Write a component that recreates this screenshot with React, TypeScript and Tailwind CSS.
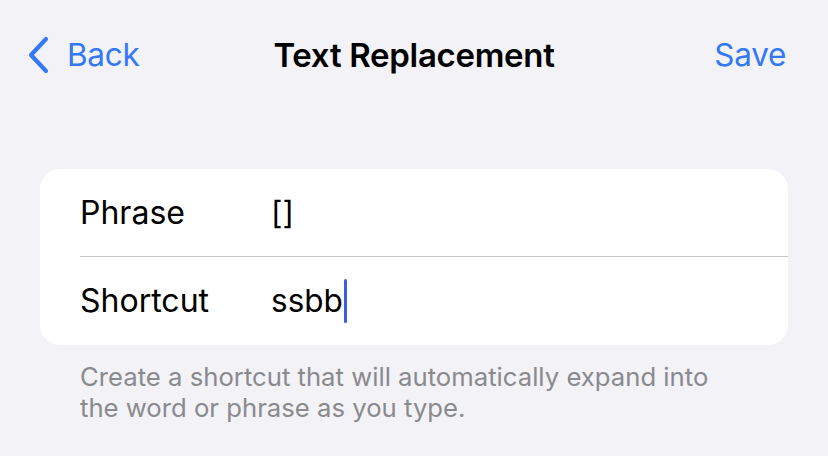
import React from 'react'

export default function App() {
  return (
    <div
      className="w-[828px] h-[456px] bg-[#f2f2f7] overflow-hidden"
      style={{ fontFamily: 'Inter, "Noto Sans", sans-serif' }}
    >
      {/* nav bar */}
      <div className="relative flex items-center justify-between h-[56px] mt-[27px] pl-[26px] pr-[42px]">
        <button className="flex items-center gap-[17px] text-[#3478f6]">
          <svg width="24" height="38" viewBox="0 0 24 38" fill="none">
            <path d="M20 3 L5 19 L20 35" stroke="#3478f6" strokeWidth="4.2" strokeLinecap="round" strokeLinejoin="round" />
          </svg>
          <span className="text-[31.5px] leading-none tracking-[-0.3px]">Back</span>
        </button>
        <span className="absolute left-1/2 -translate-x-1/2 text-[33px] leading-none font-semibold text-black tracking-[-0.3px]">
          Text Replacement
        </span>
        <button className="text-[31.5px] leading-none text-[#3478f6] tracking-[-0.3px]">Save</button>
      </div>

      {/* card */}
      <div className="mx-[40px] mt-[86px] bg-white rounded-[20px]">
        <div className="flex items-center h-[87px] pl-[40px]">
          <span className="w-[191px] text-[32px] text-black">Phrase</span>
          <span className="text-[31.5px] text-black">[]</span>
        </div>
        <div className="ml-[40px] h-px bg-[#c6c6c8]" />
        <div className="flex items-center h-[88px] pl-[40px]">
          <span className="w-[191px] text-[32px] text-black">Shortcut</span>
          <span className="flex items-center text-[31.5px] text-black">
            ssbb
            <span className="ml-[1px] w-[3px] h-[44px] rounded-full bg-[#3b5ce6]" />
          </span>
        </div>
      </div>

      {/* footer */}
      <p className="mx-[80px] mt-[16px] text-[25.7px] leading-[31px] text-[#8a8a8e] whitespace-nowrap">
        Create a shortcut that will automatically expand into
        <br />
        the word or phrase as you type.
      </p>
    </div>
  )
}
